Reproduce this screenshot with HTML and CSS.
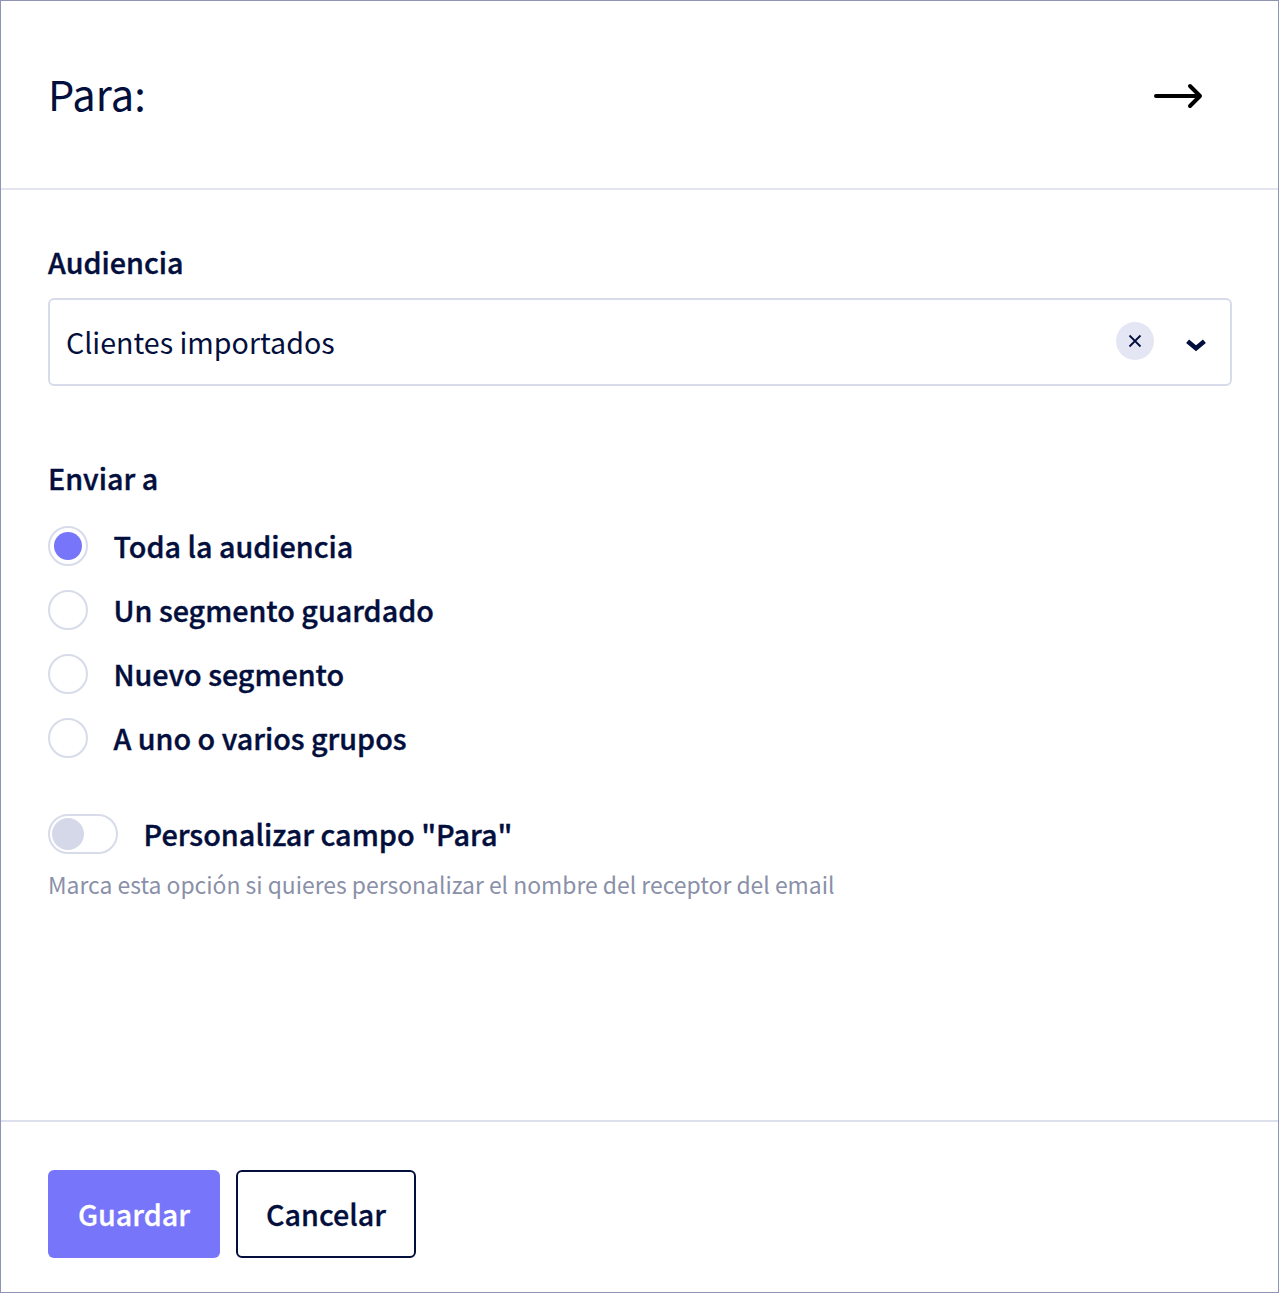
FILE: index.html
```html
<!DOCTYPE html>
<html lang="es">
<head>
<meta charset="utf-8">
<title>Para</title>
<link rel="stylesheet" href="styles.css">
</head>
<body>
<div class="panel">
  <header class="head">
    <h1 class="title">Para:</h1>
    <svg class="arrow" width="50" height="30" viewBox="0 0 50 30" fill="none" stroke="#000" stroke-width="4" stroke-linecap="round" stroke-linejoin="round"><path d="M2 15h44M36 5l10 10-10 10"/></svg>
  </header>
  <main class="body">
    <label class="label">Audiencia</label>
    <div class="select">
      <span class="value">Clientes importados</span>
      <span class="clear"><svg width="14" height="14" viewBox="0 0 14 14" fill="none" stroke="#020e3c" stroke-width="1.800"><path d="M1.500 1.500l11 11M12.500 1.500l-11 11"/></svg></span>
      <svg class="chev" width="20" height="14" viewBox="0 0 20 14" fill="none" stroke="#020e3c" stroke-width="4.500"><path d="M1.600 3.200L10 10.300l8.400-7.100"/></svg>
    </div>
    <div class="label send">Enviar a</div>
    <div class="radios">
      <div class="radio"><span class="dot on"></span><span>Toda la audiencia</span></div>
      <div class="radio"><span class="dot"></span><span>Un segmento guardado</span></div>
      <div class="radio"><span class="dot"></span><span>Nuevo segmento</span></div>
      <div class="radio"><span class="dot"></span><span>A uno o varios grupos</span></div>
    </div>
    <div class="toggle-row"><span class="toggle"><span class="knob"></span></span><span>Personalizar campo "Para"</span></div>
    <p class="hint">Marca esta opción si quieres personalizar el nombre del receptor del email</p>
  </main>
  <footer class="foot">
    <button class="btn primary">Guardar</button>
    <button class="btn ghost">Cancelar</button>
  </footer>
</div>
</body>
</html>
```
FILE: styles.css
```css
* { box-sizing: border-box; }
html, body { margin: 0; padding: 0; height: 100%; }
body {
  font-family: "Noto Sans CJK JP", "Noto Sans", sans-serif;
  color: #020e3c;
  background: #fff;
}
.panel {
  height: 1293px;
  border: 1px solid #8e94b4;
  display: flex;
  flex-direction: column;
}
.head {
  height: 189px;
  padding: 0 74px 3px 47px;
  border-bottom: 2px solid #e2e4f0;
  display: flex;
  align-items: center;
  justify-content: space-between;
  flex: none;
}
.title { margin: 0; font-size: 41.600px; font-weight: 400; line-height: 52px; }
.arrow { display: block; margin-top: 6px; }
.body { flex: 1; padding: 52px 46px 0 47px; }
.label { display: block; font-size: 28.700px; font-weight: 500; -webkit-text-stroke: 0.4px #020e3c; line-height: 40px; }
.select {
  margin-top: 16px;
  height: 88px;
  border: 2px solid #d8dbea;
  border-radius: 6px;
  display: flex;
  align-items: center;
  padding: 0 24px 0 16px;
}
.value { flex: 1; font-size: 28.600px; line-height: 40px; }
.clear {
  width: 38px; height: 38px; border-radius: 50%;
  background: #e4e7f3;
  display: flex; align-items: center; justify-content: center;
  margin: 0 32px 0 0; position: relative; top: -1px;
}
.chev { display: block; position: relative; top: 3px; }
.send { margin-top: 72px; }
.radios { margin-top: 16px; }
.radio { height: 64px; display: flex; align-items: center; gap: 25.500px; font-size: 28.700px; font-weight: 500; -webkit-text-stroke: 0.4px #020e3c; line-height: 40px; }
.dot { width: 40px; height: 40px; border: 2px solid #d8dbea; border-radius: 50%; flex: none; display: flex; align-items: center; justify-content: center; }
.dot.on::after { content: ""; width: 28px; height: 28px; border-radius: 50%; background: #7775f9; }
.toggle-row { margin-top: 44px; display: flex; align-items: center; gap: 25.500px; font-size: 28.800px; font-weight: 500; -webkit-text-stroke: 0.4px #020e3c; line-height: 40px; height: 40px; }
.toggle { width: 70px; height: 40px; border: 2px solid #d8dbea; border-radius: 20px; padding: 2px; display: block; flex: none; }
.knob { display: block; width: 32px; height: 32px; border-radius: 50%; background: #d5d8e8; }
.hint { margin: 12px 0 0; font-size: 22.900px; line-height: 36px; color: #8a90a8; }
.foot {
  height: 172px;
  flex: none;
  border-top: 2px solid #dcdfec;
  padding: 48px 47px 0;
  display: flex;
  gap: 16px;
  align-items: flex-start;
}
.btn { height: 88px; border-radius: 6px; font: 500 28.700px/40px "Noto Sans CJK JP", "Noto Sans", sans-serif; }
.primary { width: 172px; background: #7775f9; color: #fff; border: 0; -webkit-text-stroke: 0.3px #fff; }
.ghost { width: 180px; background: #fff; color: #020e3c; border: 2px solid #020e3c; -webkit-text-stroke: 0.3px #020e3c; }
```
